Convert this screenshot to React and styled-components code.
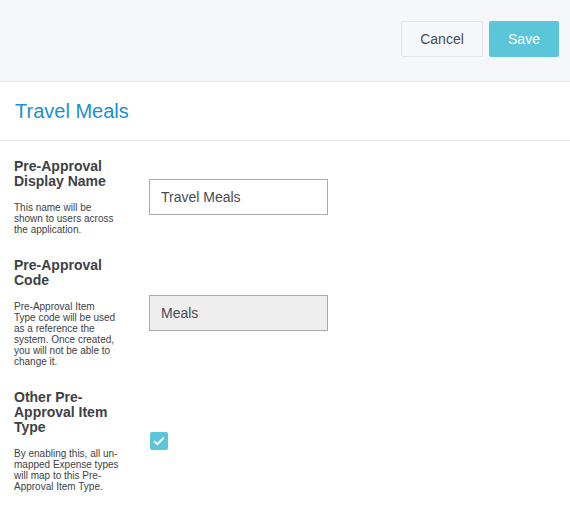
import React from 'react';
import styled, { createGlobalStyle } from 'styled-components';

const fields = [
  {
    label: 'Pre-Approval Display Name',
    help: ['This name will be', 'shown to users across', 'the application.'],
    kind: 'input',
    value: 'Travel Meals',
  },
  {
    label: 'Pre-Approval Code',
    help: [
      'Pre-Approval Item',
      'Type code will be used',
      'as a reference the',
      'system. Once created,',
      'you will not be able to',
      'change it.',
    ],
    kind: 'input',
    value: 'Meals',
    disabled: true,
  },
  {
    label: 'Other Pre-Approval Item Type',
    help: [
      'By enabling this, all un-',
      'mapped Expense types',
      'will map to this Pre-',
      'Approval Item Type.',
    ],
    kind: 'check',
  },
];

const App = () => {
  return (
    <Page>
      <GlobalStyle />
      <Toolbar>
        <CancelButton>Cancel</CancelButton>
        <SaveButton>Save</SaveButton>
      </Toolbar>
      <TitleBar>
        <Title>Travel Meals</Title>
      </TitleBar>
      <Form>
        {fields.map((f) => (
          <Row key={f.label}>
            <LabelCol>
              <Label>{f.label}</Label>
              <Help>
                {f.help.map((line) => (
                  <HelpLine key={line}>{line}</HelpLine>
                ))}
              </Help>
            </LabelCol>
            {f.kind === 'input' ? (
              <TextInput defaultValue={f.value} readOnly $disabled={f.disabled} />
            ) : (
              <Check>
                <svg width="18" height="18" viewBox="0 0 18 18">
                  <path d="M4.2 9.2 L7.4 12.2 L13.8 5.8" fill="none" stroke="#fff" strokeWidth="2" />
                </svg>
              </Check>
            )}
          </Row>
        ))}
      </Form>
    </Page>
  );
};

export default App;

const GlobalStyle = createGlobalStyle`
  body {
    margin: 0;
    background: #fff;
    font-family: "Liberation Sans", Arial, sans-serif;
  }
`;

const Page = styled.div`
  width: 570px;
`;

const Toolbar = styled.div`
  display: flex;
  justify-content: flex-end;
  gap: 6px;
  height: 82px;
  box-sizing: border-box;
  padding: 21px 11px 0 0;
  background-color: #f5f7fa;
  border-bottom: 1px solid #e4e7ea;
`;

const BaseButton = styled.button`
  height: 36px;
  font-family: "Liberation Sans", Arial, sans-serif;
  font-size: 14px;
  border-radius: 2px;
  cursor: pointer;
`;

const CancelButton = styled(BaseButton)`
  width: 82px;
  background-color: #f5f7fa;
  color: #444c55;
  border: 1px solid #e2e5e8;
`;

const SaveButton = styled(BaseButton)`
  width: 70px;
  background-color: #5bc5d9;
  color: #fff;
  border: none;
`;

const TitleBar = styled.div`
  height: 59px;
  box-sizing: border-box;
  padding: 17px 15px 0;
  border-bottom: 1px solid #e4e7ea;
`;

const Title = styled.h1`
  margin: 0;
  font-size: 20px;
  font-weight: normal;
  line-height: 24px;
  color: #1b8fd2;
`;

const Form = styled.div`
  display: flex;
  flex-direction: column;
  gap: 23px;
  padding: 18px 14px;
`;

const Row = styled.div`
  display: flex;
  align-items: center;
  gap: 25px;
`;

const LabelCol = styled.div`
  width: 110px;
`;

const Label = styled.div`
  width: 104px;
  font-size: 14px;
  font-weight: bold;
  line-height: 15px;
  color: #3d4146;
`;

const Help = styled.div`
  margin-top: 13px;
  font-size: 10px;
  line-height: 11px;
  color: #3d4146;
`;

const HelpLine = styled.div`
  white-space: nowrap;
`;

const TextInput = styled.input`
  width: 179px;
  height: 36px;
  box-sizing: border-box;
  padding: 0 11px;
  font-family: "Liberation Sans", Arial, sans-serif;
  font-size: 14px;
  color: #444c55;
  border: 1px solid #aaaaaa;
  background-color: ${({ $disabled }) => ($disabled ? '#eeeeee' : '#fff')};
  outline: none;
`;

const Check = styled.div`
  width: 18px;
  height: 18px;
  margin-left: 1px;
  border-radius: 2px;
  background-color: #5bc5d9;

  svg {
    display: block;
  }
`;
